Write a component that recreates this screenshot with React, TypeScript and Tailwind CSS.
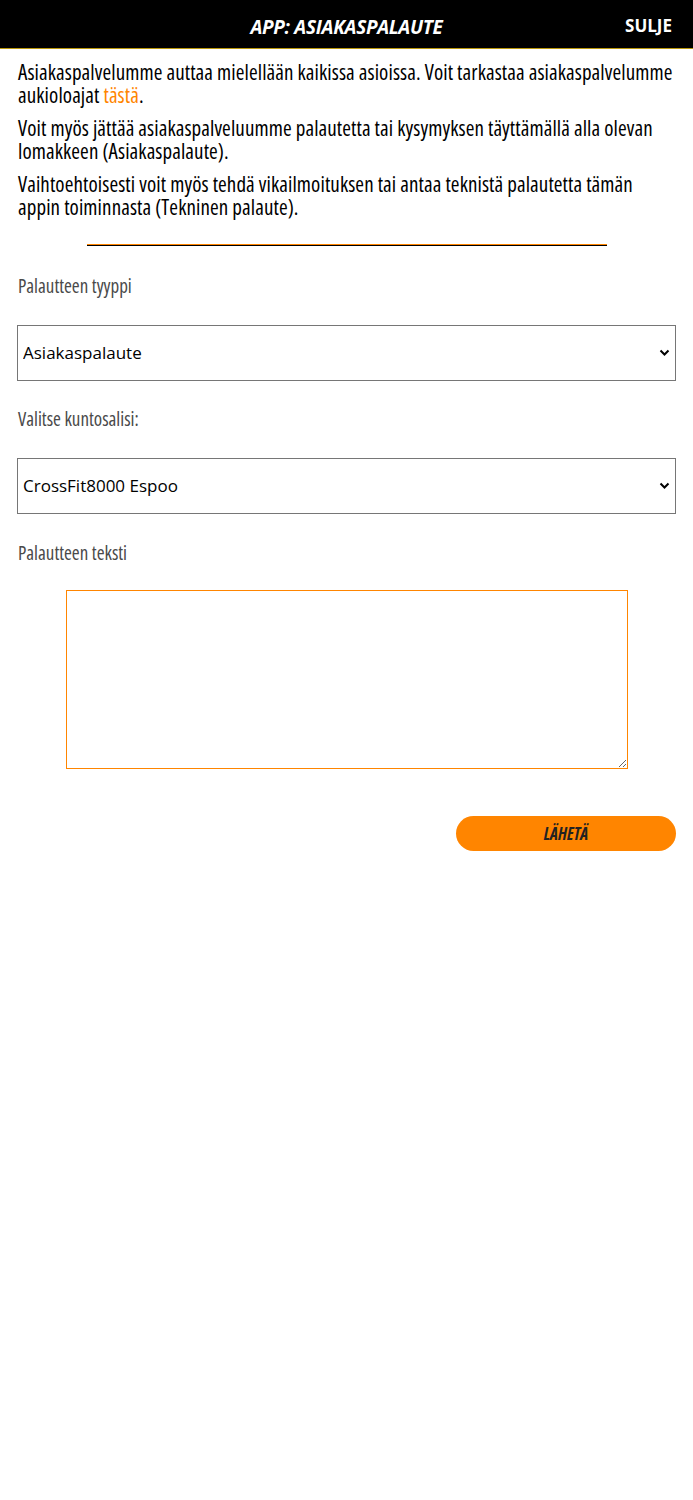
import { useState } from "react";

const narrow = { fontFamily: '"Open Sans", sans-serif', fontStretch: "75%" };
const title = { fontFamily: '"Open Sans", sans-serif', fontStretch: "90%" };
const plain = { fontFamily: '"Open Sans", sans-serif' };

function Chevron() {
  return (
    <svg
      width="11"
      height="8"
      viewBox="0 0 11 8"
      className="pointer-events-none absolute right-[6px] top-1/2 -translate-y-1/2"
    >
      <path d="M1.5 1.5 L5.5 5.5 L9.5 1.5" fill="none" stroke="#000" strokeWidth="2" />
    </svg>
  );
}

function Label({ children }) {
  return (
    <p className="h-[24px] pl-[1px] text-[19px] leading-[24px] text-[#4a4a4a]" style={narrow}>
      {children}
    </p>
  );
}

export default function App() {
  const [type, setType] = useState("Asiakaspalaute");
  const [gym, setGym] = useState("CrossFit8000 Espoo");
  const [text, setText] = useState("");

  return (
    <div className="min-h-[1500px] bg-white">
      <div className="relative flex h-[49px] items-center justify-center border-b border-[#b8960a] bg-black">
        <p className="pt-[6px] text-[19px] font-bold italic tracking-[-0.3px] text-white" style={title}>
          APP: ASIAKASPALAUTE
        </p>
        <button className="absolute right-[21px] top-[13px] text-[17px] font-bold text-white" style={plain}>
          SULJE
        </button>
      </div>

      <div
        className="flex flex-col gap-[11px] px-[18px] pt-[12px] text-[21px] leading-[22.5px] tracking-[0.1px] text-black"
        style={narrow}
      >
        <p>
          Asiakaspalvelumme auttaa mielellään kaikissa asioissa. Voit tarkastaa asiakaspalvelumme aukioloajat{" "}
          <a className="text-[#ff8500]">tästä</a>.
        </p>
        <p>Voit myös jättää asiakaspalveluumme palautetta tai kysymyksen täyttämällä alla olevan lomakkeen (Asiakaspalaute).</p>
        <p>Vaihtoehtoisesti voit myös tehdä vikailmoituksen tai antaa teknistä palautetta tämän appin toiminnasta (Tekninen palaute).</p>
      </div>

      <div className="mx-auto mt-[26px] h-[2px] w-[520px] border-t border-[#ff8500] bg-black" />

      <div className="px-[17px]">
        <div className="mt-[28px]">
          <Label>Palautteen tyyppi</Label>
        </div>
        <div className="relative mt-[27px]">
          <select
            value={type}
            onChange={(e) => setType(e.target.value)}
            className="h-[56px] w-full appearance-none rounded-none border border-[#767676] bg-white px-[5px] text-[17px] text-black"
            style={plain}
          >
            <option>Asiakaspalaute</option>
            <option>Tekninen palaute</option>
          </select>
          <Chevron />
        </div>

        <div className="mt-[26px]">
          <Label>Valitse kuntosalisi:</Label>
        </div>
        <div className="relative mt-[27px]">
          <select
            value={gym}
            onChange={(e) => setGym(e.target.value)}
            className="h-[56px] w-full appearance-none rounded-none border border-[#767676] bg-white px-[5px] text-[17px] text-black"
            style={plain}
          >
            <option>CrossFit8000 Espoo</option>
          </select>
          <Chevron />
        </div>

        <div className="mt-[27px]">
          <Label>Palautteen teksti</Label>
        </div>
      </div>

      <div className="mt-[25px] flex justify-center">
        <textarea
          value={text}
          onChange={(e) => setText(e.target.value)}
          className="block h-[179px] w-[562px] border border-[#ff8500] outline-none"
        />
      </div>

      <div className="mt-[47px] flex justify-end px-[17px]">
        <button
          className="h-[35px] w-[220px] rounded-full bg-[#ff8500] text-[17px] font-bold italic text-[#222]"
          style={narrow}
        >
          LÄHETÄ
        </button>
      </div>
    </div>
  );
}
